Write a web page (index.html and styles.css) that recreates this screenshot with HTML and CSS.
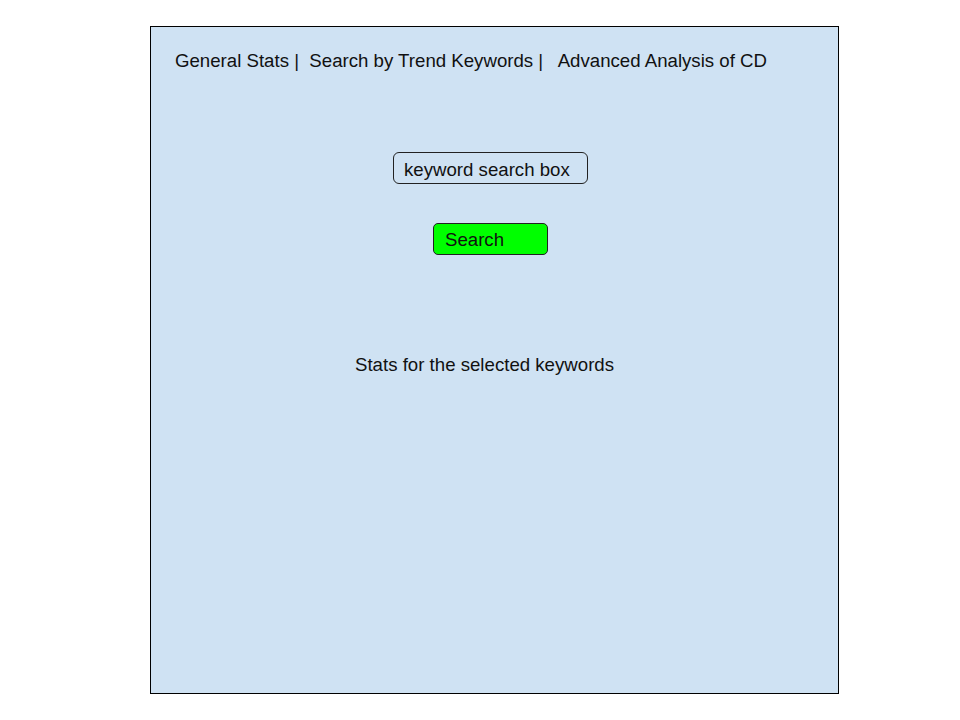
FILE: index.html
```html
<!DOCTYPE html>
<html>
<head>
<meta charset="utf-8">
<link rel="stylesheet" href="styles.css">
</head>
<body>
<div class="panel">
  <nav class="nav">General Stats |  Search by Trend Keywords |   Advanced Analysis of CD</nav>
  <div class="search-box">keyword search box</div>
  <div class="search-btn">Search</div>
  <div class="stats">Stats for the selected keywords</div>
</div>
</body>
</html>
```
FILE: styles.css
```css
html, body {
  margin: 0;
  padding: 0;
  background: #ffffff;
}
body {
  font-family: "Liberation Sans", Arial, sans-serif;
  font-size: 18.65px;
  color: #111111;
}
.panel {
  box-sizing: border-box;
  margin: 26px 0 0 150px;
  width: 689px;
  height: 668px;
  border: 1px solid #000;
  background: #cfe2f3;
  display: flex;
  flex-direction: column;
  align-items: flex-start;
}
.nav {
  white-space: pre;
  margin: 23px 0 0 24px;
  line-height: 21px;
}
.search-box {
  box-sizing: border-box;
  margin: 81px 0 0 242px;
  width: 195px;
  height: 32px;
  border: 1px solid #222;
  border-radius: 6px;
  padding: 4px 0 0 10px;
  line-height: 26px;
}
.search-btn {
  box-sizing: border-box;
  margin: 39px 0 0 282px;
  width: 115px;
  height: 32px;
  border: 1px solid #222;
  border-radius: 5px;
  background: #00ff00;
  padding: 3px 0 0 11px;
  line-height: 26px;
}
.stats {
  margin: 99px 0 0 204px;
  line-height: 21px;
}
```
